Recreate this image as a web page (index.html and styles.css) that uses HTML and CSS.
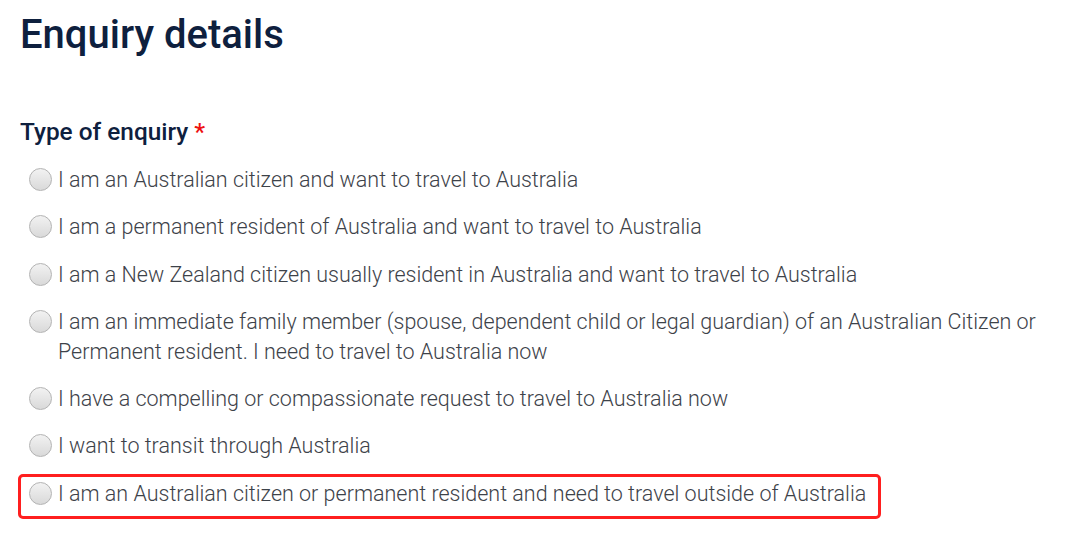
FILE: index.html
```html
<!DOCTYPE html>
<html lang="en">
	<head>
		<meta charset="UTF-8" />
		<title>Enquiry details</title>
		<link rel="stylesheet" href="styles.css">
	</head>
	<body>
		<div class="page">
			<h1 class="title">Enquiry details</h1>

			<div class="field">
				<div class="label">Type of enquiry <span class="req">*</span></div>
				<div class="options">
					<label class="option"><span class="radio"></span><span class="text">I am an Australian citizen and want to travel to Australia</span></label>
					<label class="option"><span class="radio"></span><span class="text">I am a permanent resident of Australia and want to travel to Australia</span></label>
					<label class="option"><span class="radio"></span><span class="text">I am a New Zealand citizen usually resident in Australia and want to travel to Australia</span></label>
					<label class="option"><span class="radio"></span><span class="text">I am an immediate family member (spouse, dependent child or legal guardian) of an Australian Citizen or Permanent resident. I need to travel to Australia now</span></label>
					<label class="option"><span class="radio"></span><span class="text">I have a compelling or compassionate request to travel to Australia now</span></label>
					<label class="option"><span class="radio"></span><span class="text">I want to transit through Australia</span></label>
					<label class="option marked"><span class="radio"></span><span class="text">I am an Australian citizen or permanent resident and need to travel outside of Australia</span></label>
				</div>
			</div>
		</div>
	</body>
</html>
```

FILE: styles.css
```css
body {
	margin: 0;
	background: #fff;
	font-family: Roboto, "Liberation Sans", sans-serif;
}

.page {
	padding: 10px 20px 0 20px;
}

.title {
	margin: 0;
	font-size: 40px;
	font-weight: 500;
	color: #0e203e;
	line-height: 50px;
}

.field {
	margin-top: 56px;
}

.label {
	font-size: 24.4px;
	font-weight: 500;
	color: #0e203e;
	line-height: 32px;
}

.req {
	color: #ee1111;
}

.options {
	display: flex;
	flex-direction: column;
	gap: 17.3px;
	margin-top: 17px;
}

.option {
	display: flex;
	align-items: flex-start;
	gap: 6px;
	padding-left: 9px;
	font-size: 21.5px;
	font-weight: 300;
	line-height: 30px;
	color: #3d4249;
	max-width: 1030px;
}

.radio {
	flex: none;
	width: 21px;
	height: 21px;
	margin-top: 3px;
	border-radius: 50%;
	border: 1px solid #b3b3b3;
	background: linear-gradient(#f2f2f2, #d9d9d9);
}

.marked {
	align-self: flex-start;
	margin-left: -2px;
	padding: 2px 12px 7px 8px;
	margin-top: -5px;
	border: 3px solid #ff1f1f;
	border-radius: 5px;
}
```
